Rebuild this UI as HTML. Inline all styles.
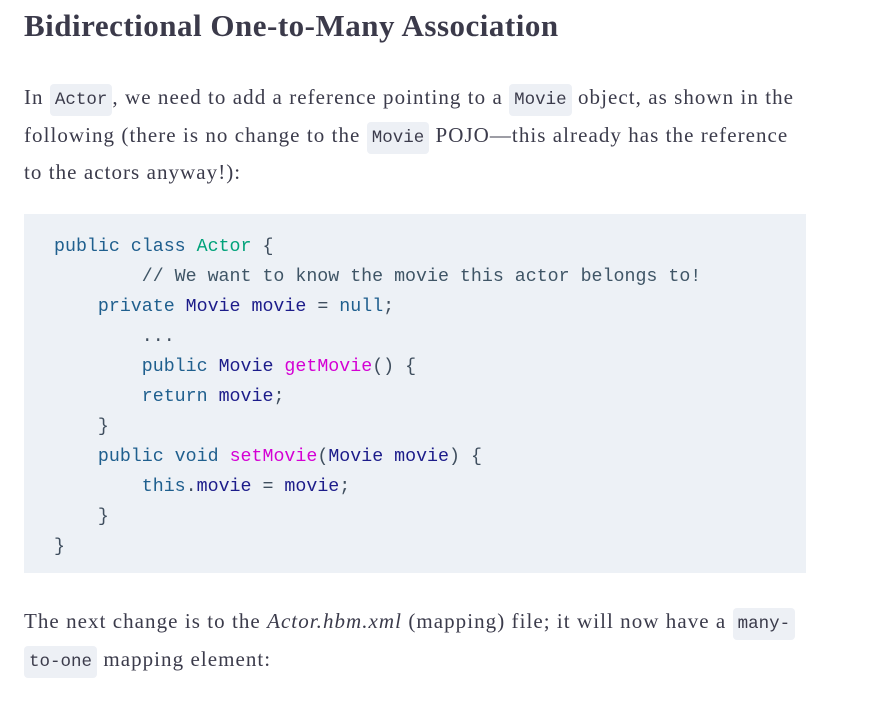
<!DOCTYPE html>
<html><head><style>
body{margin:0;background:#fff;width:892px;height:703px;overflow:hidden;font-family:"Liberation Serif",serif;color:#3b3b4b;}
h2{position:absolute;left:24px;top:8px;margin:0;font-size:31px;font-weight:bold;color:#3b3a4a;letter-spacing:0.5px;white-space:nowrap}
p{position:absolute;left:24px;margin:0;font-size:21px;letter-spacing:1.05px;line-height:34.5px;width:850px;white-space:nowrap}
code{font-family:"Liberation Mono",monospace;font-size:17.5px;letter-spacing:0;background:#edf0f5;border-radius:4px;padding:6px 5px;color:#3b3b4b}
pre{position:absolute;left:24px;top:214px;width:782px;height:359px;margin:0;background:#edf1f6;box-sizing:border-box;padding:18px 30px;font-family:"Liberation Mono",monospace;font-size:18.3px;line-height:30px;color:#3f4e5e}
.k{color:#1f5f8e}.t{color:#00a27a}.n{color:#1c1c8a}.f{color:#d400d4}.c{color:#3f5566}
</style></head><body>
<h2>Bidirectional One-to-Many Association</h2>
<p style="top:80px">In <code>Actor</code>, we need to add a reference pointing to a <code>Movie</code> object, as shown in the<br>following (there is no change to the <code>Movie</code> POJO—this already has the reference<br>to the actors anyway!):</p>
<pre><span class="k">public class</span> <span class="t">Actor</span> {
        <span class="c">// We want to know the movie this actor belongs to!</span>
    <span class="k">private</span> <span class="n">Movie movie</span> = <span class="k">null</span>;
        ...
        <span class="k">public</span> <span class="n">Movie</span> <span class="f">getMovie</span>() {
        <span class="k">return</span> <span class="n">movie</span>;
    }
    <span class="k">public void</span> <span class="f">setMovie</span>(<span class="n">Movie movie</span>) {
        <span class="k">this</span>.<span class="n">movie</span> = <span class="n">movie</span>;
    }
}</pre>
<p style="top:604px">The next change is to the <i>Actor.hbm.xml</i> (mapping) file; it will now have a <code>many-</code><br><code>to-one</code> mapping element:</p>
</body></html>
